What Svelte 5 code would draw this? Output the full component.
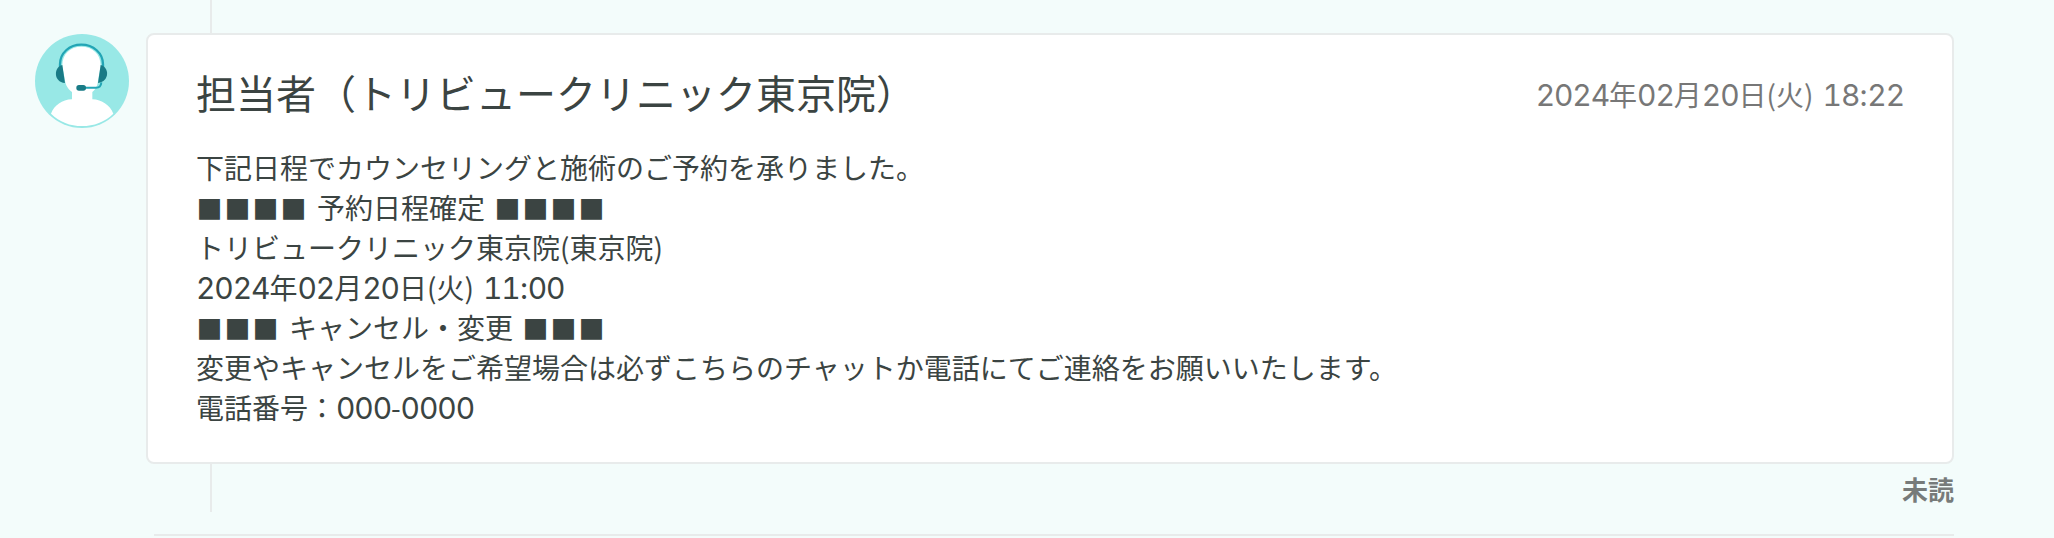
<script>
  const title = '担当者（トリビュークリニック東京院）';
  const sentAt = '2024年02月20日(火) 18:22';
  const lines = [
    '下記日程でカウンセリングと施術のご予約を承りました。',
    '■■■■ 予約日程確定 ■■■■',
    'トリビュークリニック東京院(東京院)',
    '2024年02月20日(火) 11:00',
    '■■■ キャンセル・変更 ■■■',
    '変更やキャンセルをご希望場合は必ずこちらのチャットか電話にてご連絡をお願いいたします。',
    '電話番号：000-0000'
  ];

  // Splits a line into runs so digits, brackets and blocks get their own metrics.
  function runs(text) {
    return text.match(/\d+|[()]|[:-]|■+| |[^\d():\-■ ]+/g).map((t) => ({
      t,
      kind: /\d/.test(t) ? 'num' : /[()-]/.test(t) ? 'paren' : t === ':' ? 'colon' : t[0] === '■' ? 'block' : t === ' ' ? 'space' : 'ja'
    }));
  }
</script>

{#snippet rich(text)}{#each runs(text) as r}<span class={r.kind}>{r.t}</span>{/each}{/snippet}

<main class="thread">
  <div class="row">
    <svg class="avatar" viewBox="45 42 282 282" aria-hidden="true">
      <circle cx="186" cy="183" r="141" fill="#98e8e6" />
      <path d="M93 281C103 256 126 239 156 238V216C140 204 136 190 134 176L127 137C127 102 150 80 184 80S242 102 242 137L235 176C233 190 232 204 217 216V238C246 239 270 256 280 281C254 306 222 318 186 318S119 306 93 281Z" fill="#fff" />
      <path d="M120 141V133C120 99 148 74 184 74S249 99 249 133V141" fill="none" stroke="#22a5b5" stroke-width="7" />
      <path d="M127 135C101 141 99 186 135 189Z" fill="#197b86" />
      <path d="M242 135C268 141 270 184 234 189Z" fill="#197b86" />
      <path d="M244 187C243 199 239 203 228 203H195" fill="none" stroke="#22a5b5" stroke-width="6" />
      <rect x="169" y="195" width="29" height="17" rx="8" fill="#197b86" />
    </svg>
    <article class="card">
      <header>
        <h1>{title}</h1>
        <time>{@render rich(sentAt)}</time>
      </header>
      <div class="body">
        {#each lines as line}
          <p>{@render rich(line)}</p>
        {/each}
      </div>
    </article>
  </div>
  <div class="status">未読</div>
  <div class="divider"></div>
</main>

<style>
  :global(body) {
    background: #f3fcfb;
  }
  .thread {
    position: relative;
    box-sizing: border-box;
    height: 538px;
    padding: 33px 100px 0 35px;
    overflow: hidden;
    background: #f3fcfb;
    color: #3b4442;
    font-family: 'Noto Sans CJK JP', sans-serif;
    font-size: 28px;
    line-height: 40px;
  }
  .thread::before {
    content: '';
    position: absolute;
    left: 210px;
    top: 0;
    width: 2px;
    height: 512px;
    background: #e8ebeb;
  }
  .row {
    position: relative;
    display: flex;
    align-items: flex-start;
    gap: 17px;
  }
  .avatar {
    width: 94px;
    height: 94px;
    margin-top: 1px;
    flex: none;
  }
  .card {
    box-sizing: border-box;
    flex: 1;
    height: 431px;
    padding: 27px 48px 0;
    background: #fff;
    border: 2px solid #e8ebeb;
    border-radius: 8px;
  }
  header {
    display: flex;
    justify-content: space-between;
    align-items: center;
    height: 60px;
  }
  h1 {
    margin: 0;
    font-size: 40px;
    line-height: 60px;
    font-weight: 400;
  }
  time {
    margin-top: 3px;
    color: #777;
    white-space: pre;
  }
  .body {
    margin-top: 25px;
  }
  p {
    margin: 0;
    height: 40px;
    white-space: pre;
  }
  .num,
  .colon {
    font-family: Inter, 'Liberation Sans', sans-serif;
    font-size: 30px;
    font-weight: 400;
    line-height: 1;
  }
  .num {
    font-variant-numeric: tabular-nums;
    letter-spacing: -1.1px;
  }
  .paren,
  .colon,
  .space {
    display: inline-block;
    width: 10px;
    text-align: center;
  }
  .paren {
    width: 9.5px;
    line-height: 1;
  }
  .colon {
    width: 8px;
  }
  .space {
    width: 9px;
  }
  .block {
    font-size: 26px;
    letter-spacing: 2px;
    line-height: 1;
    margin-left: 0.5px;
    margin-right: -0.5px;
  }
  .status {
    height: 52px;
    padding-top: 5px;
    box-sizing: border-box;
    text-align: right;
    font-size: 26px;
    font-weight: 700;
    line-height: 40px;
    color: #777b7a;
  }
  .divider {
    height: 2px;
    margin: 18px 0 0 119px;
    background: #e8ebeb;
  }
</style>
